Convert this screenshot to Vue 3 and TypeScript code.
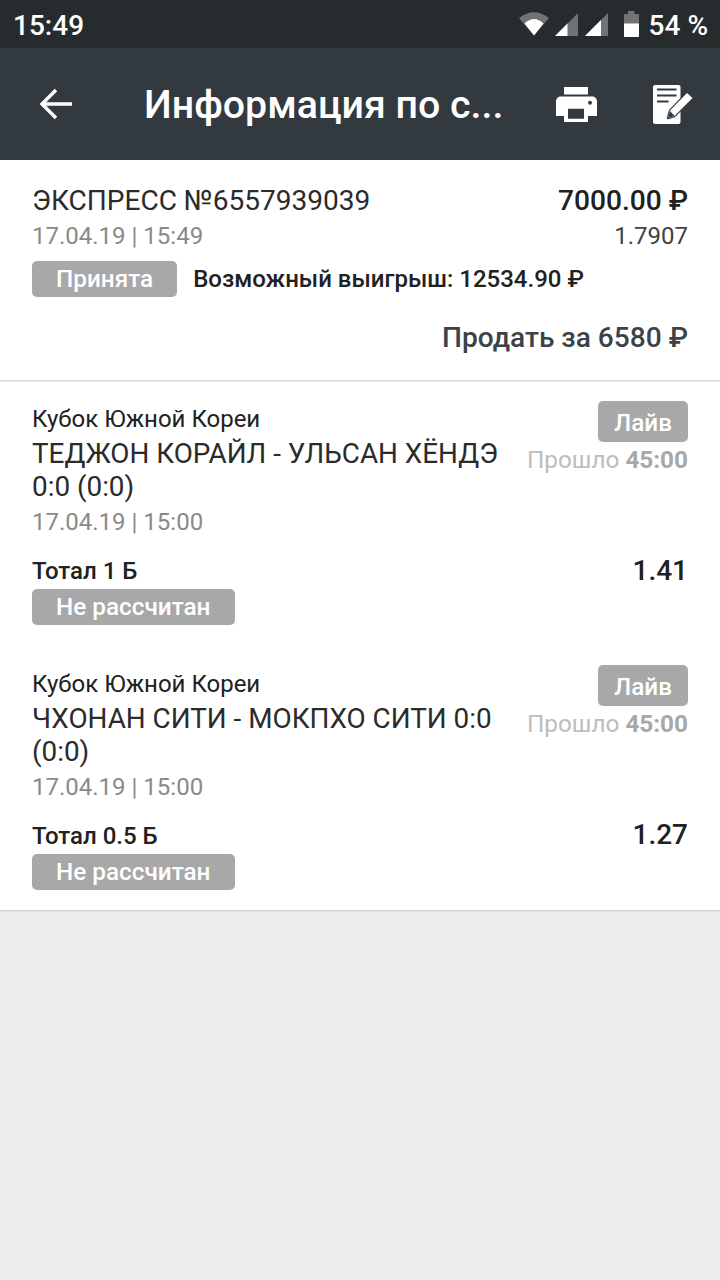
<template>
  <div class="screen">
    <div class="status-bar">
      <span class="clock">15:49</span>
      <div class="status-icons">
        <svg class="wifi" width="30" height="24" viewBox="0 0 30 24">
          <path d="M0 6 Q15 -5.500 30 6 L15 23.500 Z" fill="#6f7376" />
          <path d="M5.500 11.500 Q15 2.500 24.500 11.500 L15 23.500 Z" fill="#fff" />
        </svg>
        <svg class="signal" width="23" height="23" viewBox="0 0 23 23">
          <path d="M0 23 L23 0 V23 Z" fill="#6f7376" />
          <path d="M0 23 L12.500 10.500 V23 Z" fill="#fff" />
        </svg>
        <svg class="signal second" width="23" height="23" viewBox="0 0 23 23">
          <path d="M0 23 L23 0 V23 Z" fill="#6f7376" />
          <path d="M0 23 L16 7 V23 Z" fill="#fff" />
        </svg>
        <svg class="battery" width="15" height="26" viewBox="0 0 15 26">
          <path d="M4 0 H10.500 V3 H14 C14.500 3 15 3.500 15 4 V25 C15 25.500 14.500 26 14 26 H1 C0.500 26 0 25.500 0 25 V4 C0 3.500 0.500 3 1 3 H4 Z" fill="#6f7376" />
          <path d="M0 12.500 H15 V25 C15 25.500 14.500 26 14 26 H1 C0.500 26 0 25.500 0 25 Z" fill="#fff" />
        </svg>
        <span class="percent">54 %</span>
      </div>
    </div>

    <header class="toolbar">
      <button class="tool back" aria-label="back">
        <svg width="34" height="32" viewBox="0 0 34 32">
          <path d="M33 16 H4 M17 2 L3 16 L17 30" fill="none" stroke="#fff" stroke-width="3.400" />
        </svg>
      </button>
      <h1 class="title">Информация по с...</h1>
      <button class="tool" aria-label="print">
        <svg width="41" height="35" viewBox="0 0 41 35">
          <path d="M8 0 H32 V7.500 H8 Z" fill="#fff" />
          <path fill-rule="evenodd" d="M5 9.500 H36 C39 9.500 41 11.500 41 14.500 V29 H32 V35 H8 V29 H0 V14.500 C0 11.500 2 9.500 5 9.500 Z M12 21.700 V31.700 H28 V21.700 Z" fill="#fff" />
          <circle cx="34" cy="15.700" r="2" fill="#323a40" />
        </svg>
      </button>
      <button class="tool" aria-label="edit">
        <svg width="40" height="39" viewBox="0 0 40 39">
          <path d="M2 0 H25.500 C26.700 0 27.500 0.800 27.500 2 V37 C27.500 38.200 26.700 39 25.500 39 H2 C0.800 39 0 38.200 0 37 V2 C0 0.800 0.800 0 2 0 Z" fill="#fff" />
          <path d="M4 4.500 H23.500 M4 10.500 H23.500 M4 16.500 H15.500" stroke="#323a40" stroke-width="2" fill="none" />
          <path d="M34 8 L39.500 13 L21.500 31 L15 33 L17 25.500 Z" fill="#fff" stroke="#323a40" stroke-width="2.400" stroke-linejoin="round" paint-order="stroke" />
          <path d="M15 33 L17 26 L21.500 30.800 Z" fill="#323a40" />
        </svg>
      </button>
    </header>

    <section class="card summary">
      <div class="row">
        <span class="bet-title">ЭКСПРЕСС №6557939039</span>
        <span class="amount">7000.00 ₽</span>
      </div>
      <div class="row sub-row">
        <span class="date">17.04.19 | 15:49</span>
        <span class="coef">1.7907</span>
      </div>
      <div class="status-row">
        <span class="tag">Принята</span>
        <span class="win">Возможный выигрыш: 12534.90 ₽</span>
      </div>
      <div class="sell">Продать за 6580 ₽</div>
    </section>

    <section class="card events">
      <article v-for="ev in events" :key="ev.teams" class="event">
        <div class="event-head">
          <div class="event-info">
            <div class="league">{{ ev.league }}</div>
            <div class="teams">{{ ev.teams }}</div>
            <div class="date event-date">{{ ev.date }}</div>
          </div>
          <div class="event-side">
            <span class="tag live">Лайв</span>
            <span class="elapsed">Прошло <b>{{ ev.elapsed }}</b></span>
          </div>
        </div>
        <div class="market-row">
          <span class="market">{{ ev.market }}</span>
          <span class="odd">{{ ev.odd }}</span>
        </div>
        <span class="tag">Не рассчитан</span>
      </article>
    </section>
  </div>
</template>

<script setup lang="ts">
interface BetEvent {
  league: string
  teams: string
  date: string
  elapsed: string
  market: string
  odd: string
}

const events: BetEvent[] = [
  {
    league: 'Кубок Южной Кореи',
    teams: 'ТЕДЖОН КОРАЙЛ - УЛЬСАН ХЁНДЭ 0:0 (0:0)',
    date: '17.04.19 | 15:00',
    elapsed: '45:00',
    market: 'Тотал 1 Б',
    odd: '1.41'
  },
  {
    league: 'Кубок Южной Кореи',
    teams: 'ЧХОНАН СИТИ - МОКПХО СИТИ 0:0 (0:0)',
    date: '17.04.19 | 15:00',
    elapsed: '45:00',
    market: 'Тотал 0.5 Б',
    odd: '1.27'
  }
]
</script>

<style>
html,
body {
  margin: 0;
  background: #eeeeee;
}
</style>

<style scoped>
.screen {
  width: 720px;
  height: 1280px;
  overflow: hidden;
  background: #eeeeee;
  font-family: Roboto, "DejaVu Sans", sans-serif;
  color: #212121;
}
.status-bar {
  height: 48px;
  padding: 2px 12px 0 13px;
  box-sizing: border-box;
  display: flex;
  align-items: center;
  justify-content: space-between;
  background: #262b2e;
  color: #fff;
}
.clock {
  font-size: 28px;
  font-weight: 500;
}
.status-icons {
  display: flex;
  align-items: center;
  margin-top: -2px;
}
.signal {
  margin-left: 6px;
}
.signal.second {
  margin-left: 7px;
}
.battery {
  margin: 0 10px 0 16px;
}
.percent {
  font-size: 28px;
  font-weight: 500;
  padding-top: 2px;
}
.toolbar {
  height: 112px;
  display: flex;
  align-items: center;
  background: #323a40;
  color: #fff;
  padding: 0 27px 0 39px;
  box-sizing: border-box;
}
.tool {
  background: none;
  border: 0;
  padding: 0;
  display: flex;
  margin-left: 56px;
}
.back {
  margin-left: 0;
}
.title {
  flex: 1;
  min-width: 0;
  margin: 2px 0 0 71px;
  font-size: 39.300px;
  font-weight: 500;
  white-space: nowrap;
}
.card {
  background: #fff;
}
.summary {
  height: 220px;
  box-sizing: border-box;
  padding: 24px 32px 0;
  margin-bottom: 2px;
  box-shadow: 0 1px 1px rgba(0, 0, 0, 0.07);
}
.row {
  display: flex;
  justify-content: space-between;
  align-items: baseline;
}
.bet-title {
  font-size: 28.050px;
  color: #2b2b2b;
}
.amount {
  font-size: 28.100px;
  font-weight: 500;
}
.sub-row {
  margin-top: 5px;
}
.date {
  font-size: 24px;
  color: #8a8a8a;
}
.coef {
  font-size: 24px;
  color: #424242;
}
.status-row {
  display: flex;
  align-items: center;
  gap: 16px;
  margin-top: 11px;
}
.tag {
  display: inline-block;
  height: 36px;
  line-height: 36px;
  padding: 0 24px;
  border-radius: 5px;
  background: #a8a8a8;
  color: #fff;
  font-size: 24.300px;
  font-weight: 500;
}
.win {
  font-size: 24px;
  font-weight: 500;
}
.sell {
  margin-top: 24px;
  text-align: right;
  font-size: 28.100px;
  font-weight: 500;
  color: #3a4349;
}
.events {
  height: 528px;
  box-sizing: border-box;
  padding-top: 19px;
  box-shadow: 0 1px 2px rgba(0, 0, 0, 0.18);
}
.event {
  padding: 0 32px;
  height: 264.500px;
  box-sizing: border-box;
}
.event-head {
  display: flex;
  justify-content: space-between;
  gap: 24px;
}
.event-info {
  flex: 1;
}
.league {
  font-size: 24px;
  line-height: 36px;
}
.teams {
  font-size: 27.850px;
  line-height: 33px;
  color: #2b2b2b;
}
.event-date {
  line-height: 38px;
}
.event-side {
  display: flex;
  flex-direction: column;
  align-items: flex-end;
  flex: none;
  margin-top: -0.200px;
}
.live {
  height: 41px;
  line-height: 43px;
  padding: 0 16px;
}
.elapsed {
  margin-top: 3px;
  font-size: 24.300px;
  color: #bdbdbd;
}
.elapsed b {
  color: #a8a8a8;
  font-weight: 700;
}
.market-row {
  display: flex;
  justify-content: space-between;
  align-items: center;
  margin-top: 12px;
  height: 36px;
}
.market {
  font-size: 24px;
  font-weight: 500;
}
.odd {
  font-size: 28px;
  font-weight: 500;
  margin-top: -2px;
}
</style>
